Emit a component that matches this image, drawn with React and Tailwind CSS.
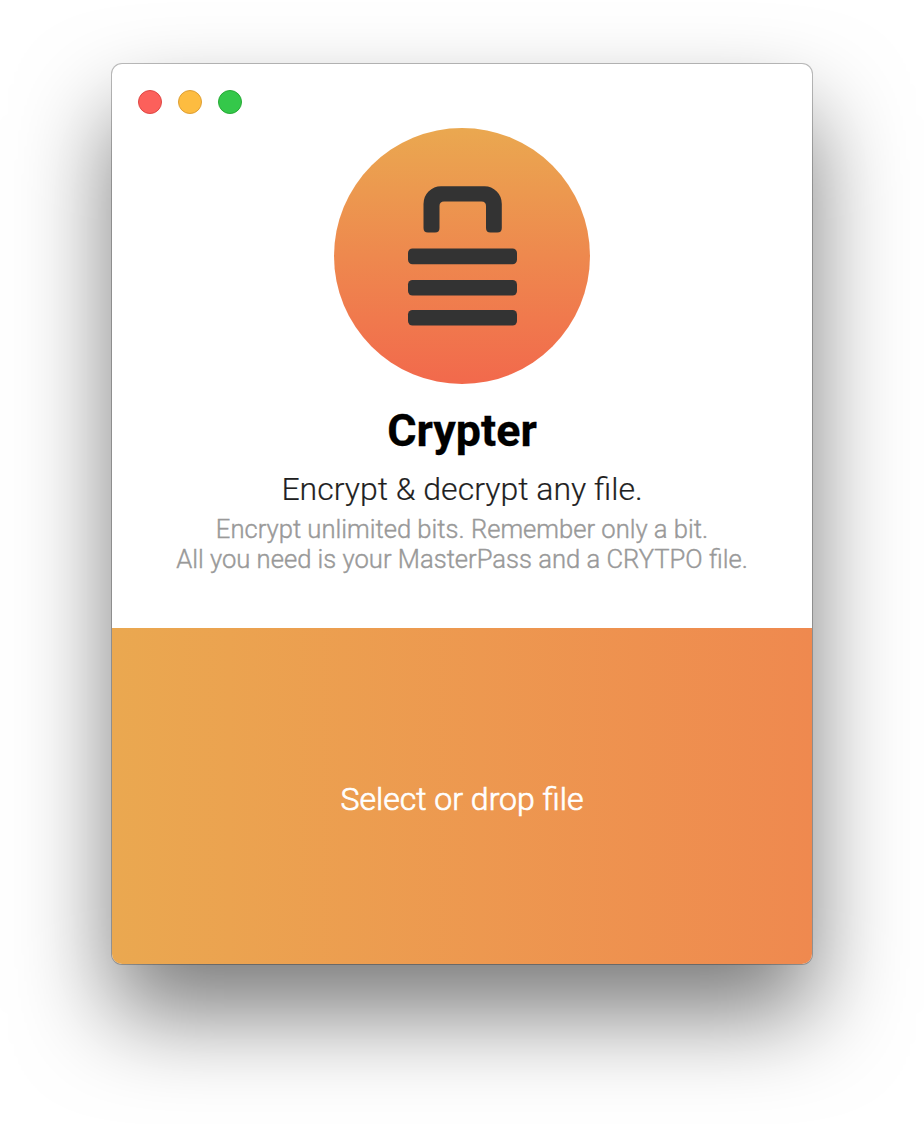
const lights = [
  'bg-[#fc605b] border-[#df4744]',
  'bg-[#fdbc40] border-[#de9f34]',
  'bg-[#34c84a] border-[#27aa35]',
];

function Logo() {
  return (
    <svg className="block h-64 w-64" viewBox="0 0 256 256">
      <defs>
        <linearGradient id="disc" x1="0" y1="0" x2="0" y2="1">
          <stop offset="0" stopColor="#eaa850" />
          <stop offset="1" stopColor="#f2694c" />
        </linearGradient>
      </defs>
      <circle cx="128" cy="128" r="128" fill="url(#disc)" />
      <g fill="#333">
        <path d="M89.500 100V76Q89.500 68.500 94.500 63.500Q100 58.200 107 58.200H150.500Q157.500 58.200 162.800 63.500Q167.800 68.500 167.800 76V100Q167.800 104.500 163.300 104.500H156.500Q152 104.500 152 100V78Q152 73.500 147.500 73.500H110Q105.500 73.500 105.500 78V100Q105.500 104.500 101 104.500H94Q89.500 104.500 89.500 100Z" />
        <rect x="74" y="120.500" width="109" height="15.700" rx="4.500" />
        <rect x="74" y="152" width="109" height="15.500" rx="4.500" />
        <rect x="74" y="182" width="109" height="15.500" rx="4.500" />
      </g>
    </svg>
  );
}

export default function App() {
  return (
    <div className="h-[1124px] w-[924px] overflow-hidden bg-white px-28 pt-16 font-['Roboto',sans-serif]">
      <main className="flex h-[900px] w-[700px] flex-col overflow-hidden rounded-[10px] bg-white shadow-[0_0_0_1px_rgba(0,0,0,0.25),0_50px_94px_rgba(0,0,0,0.52)]">
        <div className="flex h-16 shrink-0 gap-4 pl-[26px] pt-[26px]">
          {lights.map((c) => (
            <span key={c} className={`h-6 w-6 rounded-full border ${c}`} />
          ))}
        </div>
        <section className="flex h-[500px] shrink-0 flex-col items-center whitespace-nowrap">
          <Logo />
          <h1 className="mt-[21px] text-[44.8px] font-bold leading-[52px] text-black [-webkit-text-stroke:0.3px_#000]">Crypter</h1>
          <h2 className="mt-[12px] text-[32px] font-light leading-10 text-[#1f1f1f] [-webkit-text-stroke:0.2px_#1f1f1f]">Encrypt &amp; decrypt any file.</h2>
          <p className="mt-[5px] text-center text-[25.6px] font-light leading-[30px] text-[#999] [-webkit-text-stroke:0.4px_#999]">
            Encrypt unlimited bits. Remember only a bit.
            <br />
            All you need is your MasterPass and a CRYTPO file.
          </p>
        </section>
        <section className="flex flex-1 items-center justify-center bg-linear-to-r from-[#eaa850] to-[#ef894f] text-[32px] font-light text-white [-webkit-text-stroke:0.7px_#fff]">
          <span className="mt-1.5">Select or drop file</span>
        </section>
      </main>
    </div>
  );
}
